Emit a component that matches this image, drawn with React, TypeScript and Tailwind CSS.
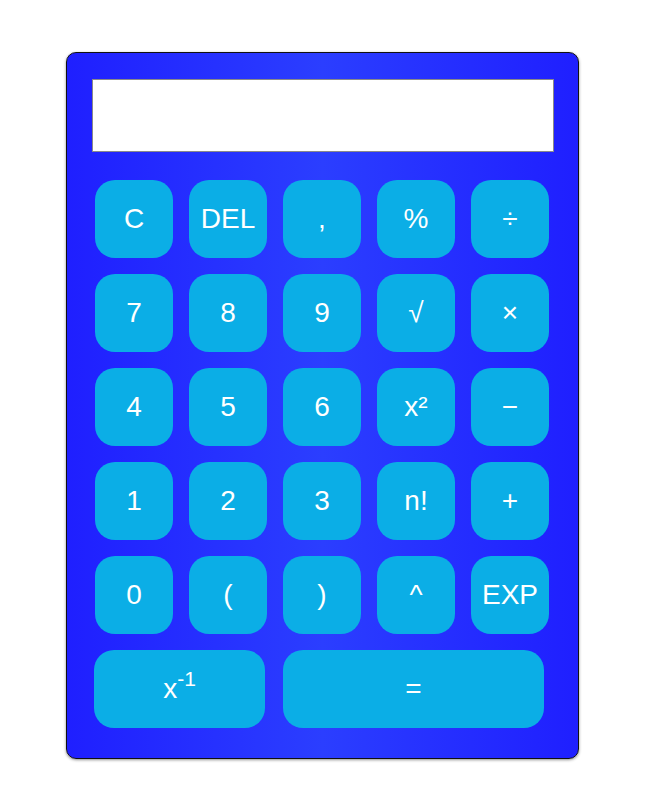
const keys = [
  "C", "DEL", ",", "%", "÷",
  "7", "8", "9", "√", "×",
  "4", "5", "6", "x²", "−",
  "1", "2", "3", "n!", "+",
  "0", "(", ")", "^", "EXP",
];

const keyClass =
  "h-[78px] rounded-[20px] bg-[#0baee6] text-white text-[28px] flex items-center justify-center";

const App = () => {
  return (
    <div className="min-h-screen bg-white pt-[52px] pl-[66px] font-['Liberation_Sans',Arial,sans-serif]">
      <div className="w-[513px] h-[707px] rounded-[10px] border border-[#111] bg-[linear-gradient(to_right,#1f1fff,#2b3eff_50%,#1f1fff)] shadow-[0_1px_3px_rgba(0,0,0,0.45)] pt-[26px] pl-[25px]">
        {/* Display */}
        <div className="w-[462px] h-[73px] bg-white border border-[#8a8a8a]" />

        {/* Keys */}
        <div className="mt-[28px] pl-[3px] grid grid-cols-[repeat(5,78px)] gap-4">
          {keys.map((k) => (
            <button key={k} className={`${keyClass} w-[78px]`}>
              {k}
            </button>
          ))}
        </div>
        <div className="mt-4 pl-[2px] flex gap-[18px]">
          <button className={`${keyClass} w-[171px]`}>
            x<sup>-1</sup>
          </button>
          <button className={`${keyClass} w-[261px]`}>=</button>
        </div>
      </div>
    </div>
  );
};

export default App;
